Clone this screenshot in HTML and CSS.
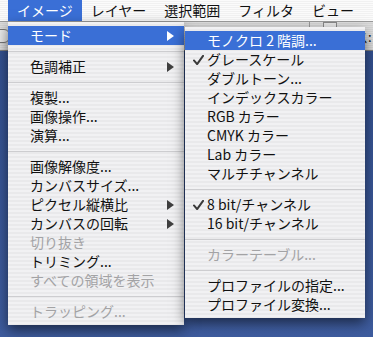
FILE: index.html
```html
<!DOCTYPE html>
<html lang="ja">
<head>
    <meta charset="UTF-8">
    <title>イメージ メニュー</title>
    <link rel="stylesheet" href="styles.css">
</head>
<body>
    <div class="menubar">
        <div class="menubar-item active">イメージ</div>
        <div class="menubar-item">レイヤー</div>
        <div class="menubar-item">選択範囲</div>
        <div class="menubar-item">フィルタ</div>
        <div class="menubar-item">ビュー</div>
    </div>

    <div class="optionsbar">
        <div class="opt-hex"></div>
        <div class="opt-divider"></div>
        <div class="opt-divider wide"></div>
        <div class="opt-box"></div>
        <div class="opt-label">ス:</div>
    </div>

    <div class="desktop"></div>

    <!-- イメージ menu -->
    <div class="menu main-menu">
        <div class="menu-item selected"><span class="mark"></span>モード<svg class="arrow" viewBox="0 0 7 10"><polygon points="0,0 7,5 0,10"/></svg></div>
        <div class="sep"></div>
        <div class="menu-item"><span class="mark"></span>色調補正<svg class="arrow" viewBox="0 0 7 10"><polygon points="0,0 7,5 0,10"/></svg></div>
        <div class="sep"></div>
        <div class="menu-item"><span class="mark"></span>複製...</div>
        <div class="menu-item"><span class="mark"></span>画像操作...</div>
        <div class="menu-item"><span class="mark"></span>演算...</div>
        <div class="sep"></div>
        <div class="menu-item"><span class="mark"></span>画像解像度...</div>
        <div class="menu-item"><span class="mark"></span>カンバスサイズ...</div>
        <div class="menu-item"><span class="mark"></span>ピクセル縦横比<svg class="arrow" viewBox="0 0 7 10"><polygon points="0,0 7,5 0,10"/></svg></div>
        <div class="menu-item"><span class="mark"></span>カンバスの回転<svg class="arrow" viewBox="0 0 7 10"><polygon points="0,0 7,5 0,10"/></svg></div>
        <div class="menu-item disabled"><span class="mark"></span>切り抜き</div>
        <div class="menu-item"><span class="mark"></span>トリミング...</div>
        <div class="menu-item disabled"><span class="mark"></span>すべての領域を表示</div>
        <div class="sep"></div>
        <div class="menu-item disabled"><span class="mark"></span>トラッピング...</div>
    </div>

    <!-- モード submenu -->
    <div class="menu sub-menu">
        <div class="menu-item selected"><span class="mark"></span>モノクロ 2 階調...</div>
        <div class="menu-item"><span class="mark"><svg class="check" viewBox="0 0 12 11"><path d="M1 6 L4.5 10 L11 1"/></svg></span>グレースケール</div>
        <div class="menu-item"><span class="mark"></span>ダブルトーン...</div>
        <div class="menu-item"><span class="mark"></span>インデックスカラー</div>
        <div class="menu-item"><span class="mark"></span>RGB カラー</div>
        <div class="menu-item"><span class="mark"></span>CMYK カラー</div>
        <div class="menu-item"><span class="mark"></span>Lab カラー</div>
        <div class="menu-item"><span class="mark"></span>マルチチャンネル</div>
        <div class="sep"></div>
        <div class="menu-item"><span class="mark"><svg class="check" viewBox="0 0 12 11"><path d="M1 6 L4.5 10 L11 1"/></svg></span>8 bit/チャンネル</div>
        <div class="menu-item"><span class="mark"></span>16 bit/チャンネル</div>
        <div class="sep"></div>
        <div class="menu-item disabled"><span class="mark"></span>カラーテーブル...</div>
        <div class="sep"></div>
        <div class="menu-item"><span class="mark"></span>プロファイルの指定...</div>
        <div class="menu-item"><span class="mark"></span>プロファイル変換...</div>
    </div>
</body>
</html>
```

FILE: styles.css
```css
body {
    margin: 0;
    width: 373px;
    height: 337px;
    overflow: hidden;
    position: relative;
    display: flex;
    flex-direction: column;
    font-family: "Noto Sans CJK JP", sans-serif;
    font-size: 14px;
    color: #111;
    background: #3c5898;
}
.menubar {
    display: flex;
    height: 21px;
    padding-left: 8px;
    background: repeating-linear-gradient(to bottom, #fbfbfb 0 1px, #f1f1f1 1px 2px);
    border-bottom: 1px solid #9a9a9a;
}
.menubar-item {
    padding: 0 9px;
    line-height: 21px;
}
.menubar-item.active {
    background: #3a6fd6;
    color: white;
}
.optionsbar {
    height: 28px;
    display: flex;
    align-items: center;
    gap: 0;
    background: repeating-linear-gradient(to bottom, #dedede 0 1px, #d4d4d4 1px 2px);
    border-bottom: 1px solid #7d7d7d;
}
.opt-hex {
    width: 14px;
    height: 12px;
    margin-left: -6px;
    border: 1px solid #777;
    border-radius: 6px;
    background: #eaeaea;
}
.opt-divider {
    width: 1px;
    height: 26px;
    align-self: flex-start;
    margin-left: 168px;
    background: #999;
}
.opt-divider.wide {
    margin-left: 130px;
}
.opt-box {
    width: 12px;
    height: 14px;
    align-self: flex-start;
    margin-left: 13px;
    border: 1px solid #888;
    background: #e6e6e6;
}
.opt-label {
    margin-left: 18px;
    font-size: 13px;
}
.desktop {
    flex: 1;
    background: linear-gradient(to bottom, #33508f, #3e5c9e);
}
.menu {
    position: absolute;
    padding: 4px 0;
    background: repeating-linear-gradient(to bottom, #f1f1f3 0 2px, #e9e9eb 2px 4px);
    box-shadow: 0 5px 12px rgba(0, 0, 0, 0.55);
}
.main-menu {
    top: 22px;
    left: 8px;
    width: 176px;
}
.sub-menu {
    top: 27px;
    left: 185px;
    width: 180px;
}
.menu-item {
    display: flex;
    align-items: center;
    height: 19px;
    line-height: 19px;
    padding: 0 10px 0 8px;
    white-space: nowrap;
}
.menu-item.selected {
    background: #3a6fd6;
    color: white;
}
.menu-item.disabled {
    color: #a3a3a5;
}
.mark {
    width: 14px;
    flex: none;
    display: flex;
    align-items: center;
}
.check {
    width: 11px;
    height: 10px;
    fill: none;
    stroke: #3a3a3a;
    stroke-width: 2.2;
    stroke-linecap: round;
    stroke-linejoin: round;
}
.arrow {
    width: 7px;
    height: 10px;
    margin-left: auto;
    fill: #3f3f3f;
}
.menu-item.selected .arrow {
    fill: white;
}
.sep {
    height: 12px;
    display: flex;
    align-items: center;
}
.sep::before {
    content: "";
    flex: 1;
    height: 1px;
    background: #cdcdd0;
}
```
